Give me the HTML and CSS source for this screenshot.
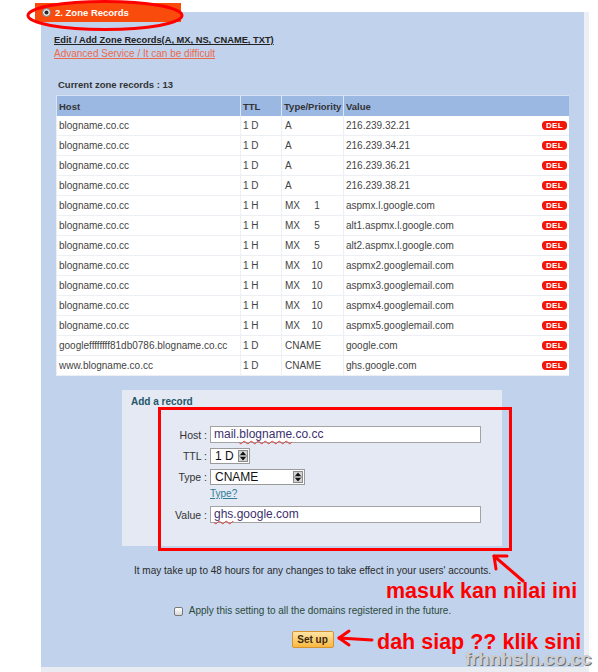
FILE: index.html
```html
<!DOCTYPE html>
<html lang="en">
<head>
  <meta charset="UTF-8">
  <title>Zone Records</title>
  <link rel="stylesheet" href="styles.css">
</head>
<body>

<div class="tab">
  <svg class="radio" width="9" height="9" viewBox="0 0 9 9">
    <circle cx="4.5" cy="4.5" r="4" fill="#e8e8e8" stroke="#7a7a7a" stroke-width="1"/>
    <circle cx="4.5" cy="4.5" r="2" fill="#2a2a2a"/>
  </svg>
  <span>2. Zone Records</span>
</div>

<div class="panel">
  <div class="intro">
    <a class="edit-link" href="#">Edit / Add Zone Records(A, MX, NS, CNAME, TXT)</a>
    <a class="adv-link" href="#">Advanced Service / It can be difficult</a>
  </div>

  <div class="count">Current zone records : 13</div>

  <table class="records">
    <colgroup>
      <col style="width: 184px">
      <col style="width: 41px">
      <col style="width: 62px">
      <col>
    </colgroup>
    <thead>
      <tr><th>Host</th><th>TTL</th><th>Type/Priority</th><th>Value</th></tr>
    </thead>
    <tbody id="zone-rows"></tbody>
  </table>

  <div class="add-box">
    <h3>Add a record</h3>
    <div class="row row-host">
      <label class="label">Host :</label>
      <div class="field">mail.<span class="spell">blogname</span>.co.cc</div>
    </div>
    <div class="row row-ttl">
      <label class="label">TTL :</label>
      <div class="select select-ttl">
        <span class="val">1 D</span>
        <span class="spin"><svg width="8" height="12" viewBox="0 0 8 12"><path d="M4 1.5 L7 5 H1 Z M1 7 H7 L4 10.5 Z" fill="#111"/><path d="M0 6 H8" stroke="#777" stroke-width="1"/></svg></span>
      </div>
    </div>
    <div class="row row-type">
      <label class="label">Type :</label>
      <div class="select select-type">
        <span class="val">CNAME</span>
        <span class="spin"><svg width="8" height="12" viewBox="0 0 8 12"><path d="M4 1.5 L7 5 H1 Z M1 7 H7 L4 10.5 Z" fill="#111"/><path d="M0 6 H8" stroke="#777" stroke-width="1"/></svg></span>
      </div>
    </div>
    <div class="row row-help">
      <span class="label"></span>
      <a class="type-help" href="#">Type?</a>
    </div>
    <div class="row row-value">
      <label class="label">Value :</label>
      <div class="field"><span class="spell">ghs</span>.google.com</div>
    </div>
  </div>

  <p class="note">It may take up to 48 hours for any changes to take effect in your users' accounts.</p>

  <div class="apply">
    <span class="checkbox"></span>
    <span>Apply this setting to all the domains registered in the future.</span>
  </div>

  <button class="setup-btn" type="button">Set up</button>
</div>

<!-- hand-drawn marks over the screen -->
<svg class="marks" width="598" height="672" viewBox="0 0 598 672">
  <ellipse cx="105" cy="15.5" rx="77" ry="14" fill="none" stroke="#ff0000" stroke-width="3"/>
  <rect x="159.5" y="408.5" width="351" height="141" fill="none" stroke="#ff0000" stroke-width="3"/>
  <g fill="none" stroke="#ff0000" stroke-width="3" stroke-linecap="round" stroke-linejoin="round">
    <path d="M523 581 L494 556"/>
    <path d="M507 556 L494 556 L496 569"/>
    <path d="M372 640 L339 638"/>
    <path d="M349 631 L339 638 L349 645"/>
  </g>
</svg>
<div class="callout callout-fill">masuk kan nilai ini</div>
<div class="callout callout-click">dah siap ?? klik sini</div>
<div class="stamp">frhnhsln.co.cc</div>

<script>
  const records = [
    ['blogname.co.cc', '1 D', 'A', '', '216.239.32.21'],
    ['blogname.co.cc', '1 D', 'A', '', '216.239.34.21'],
    ['blogname.co.cc', '1 D', 'A', '', '216.239.36.21'],
    ['blogname.co.cc', '1 D', 'A', '', '216.239.38.21'],
    ['blogname.co.cc', '1 H', 'MX', '1', 'aspmx.l.google.com'],
    ['blogname.co.cc', '1 H', 'MX', '5', 'alt1.aspmx.l.google.com'],
    ['blogname.co.cc', '1 H', 'MX', '5', 'alt2.aspmx.l.google.com'],
    ['blogname.co.cc', '1 H', 'MX', '10', 'aspmx2.googlemail.com'],
    ['blogname.co.cc', '1 H', 'MX', '10', 'aspmx3.googlemail.com'],
    ['blogname.co.cc', '1 H', 'MX', '10', 'aspmx4.googlemail.com'],
    ['blogname.co.cc', '1 H', 'MX', '10', 'aspmx5.googlemail.com'],
    ['googleffffffff81db0786.blogname.co.cc', '1 D', 'CNAME', '', 'google.com'],
    ['www.blogname.co.cc', '1 D', 'CNAME', '', 'ghs.google.com']
  ];

  const tbody = document.getElementById('zone-rows');
  records.forEach(r => {
    const tr = document.createElement('tr');
    const prio = r[3] ? `<span class="prio">${r[3]}</span>` : '';
    tr.innerHTML = `<td>${r[0]}</td><td>${r[1]}</td><td><span class="rtype">${r[2]}</span>${prio}</td>` +
      `<td><div class="value-cell"><span>${r[4]}</span><span class="del">DEL</span></div></td>`;
    tbody.appendChild(tr);
  });
</script>

</body>
</html>
```

FILE: styles.css
```css
body {
  margin: 0;
  font-family: "Liberation Sans", Arial, sans-serif;
  font-size: 10px;
  color: #333;
  background: #fff;
}

.tab {
  position: relative;
  z-index: 1;
  margin: 3px 0 0 35px;
  width: 146px;
  height: 19px;
  padding-left: 7px;
  box-sizing: border-box;
  display: flex;
  align-items: center;
  gap: 4px;
  background: #f84b0c;
  color: #fff;
  font-size: 9.5px;
  font-weight: bold;
}

.panel {
  margin: -10px 0 0 41px;
  width: 543px;
  padding: 22px 0 19px;
  background: #c0d2ec;
  border-right: 5px solid #eceff4;
  border-bottom: 6px solid #e9edf2;
}

.intro {
  padding-left: 13px;
  line-height: 13px;
}

.intro a {
  display: block;
  width: max-content;
}

.edit-link {
  color: #222;
  font-size: 9.3px;
  font-weight: bold;
}

.adv-link {
  color: #ea6a4c;
}

.count {
  margin: 18px 0 0 17px;
  line-height: 13px;
  font-size: 9.5px;
  font-weight: bold;
}

.records {
  margin: 4px 0 0 15px;
  width: 513px;
  table-layout: fixed;
  border-collapse: collapse;
  background: #fff;
}

.records th {
  height: 20px;
  padding: 0 2px;
  text-align: left;
  font-size: 9.5px;
  background: #9bb8e3;
  border-left: 1px solid #dbe5f3;
  border-top: 1px solid #d6e1f1;
  color: #333;
}

.records td {
  height: 19px;
  padding: 0 2px;
  color: #444;
  border-left: 1px solid #eceff3;
  border-bottom: 1px solid #eceff3;
  white-space: nowrap;
}

.rtype {
  display: inline-block;
  width: 22px;
  padding-left: 1px;
}

.prio {
  display: inline-block;
  width: 20px;
  text-align: center;
}

.value-cell {
  display: flex;
  justify-content: space-between;
  align-items: center;
}

.del {
  width: 25px;
  height: 9px;
  line-height: 9px;
  border-radius: 4px;
  background: #f0180a;
  color: #fff;
  font-size: 8px;
  font-weight: bold;
  text-align: center;
  letter-spacing: 0.4px;
}

.add-box {
  margin: 14px 0 0 81px;
  width: 380px;
  padding: 5px 0 23px 9px;
  box-sizing: border-box;
  background: #e4e9f3;
}

.add-box h3 {
  margin: 0;
  font-size: 10px;
  line-height: 13px;
  color: #22566a;
}

.row {
  display: flex;
  align-items: center;
}

.label {
  width: 76px;
  margin-right: 3px;
  text-align: right;
  font-size: 10.5px;
  color: #333;
}

.row-host { margin-top: 18px; }
.row-ttl { margin-top: 5px; }
.row-type { margin-top: 5px; }
.row-help { margin-top: 3px; }
.row-value { margin-top: 6px; }

.field {
  width: 271px;
  height: 17px;
  box-sizing: border-box;
  padding-left: 3px;
  line-height: 15px;
  font-size: 12px;
  color: #3c2f6e;
  background: #fff;
  border: 1px solid #a3a3a3;
}

.spell {
  text-decoration: underline wavy #e23a3a;
  text-decoration-thickness: 1px;
  text-underline-offset: 2px;
}

.select {
  height: 16px;
  box-sizing: border-box;
  display: flex;
  align-items: stretch;
  background: #fff;
  border: 1px solid #9a9a9a;
  font-size: 12px;
  color: #111;
}

.select-ttl { width: 40px; }
.select-type { width: 95px; }

.select .val {
  flex: 1;
  padding-left: 4px;
  line-height: 14px;
}

.spin {
  width: 10px;
  margin: 1px;
  box-sizing: border-box;
  display: flex;
  align-items: center;
  justify-content: center;
  background: #d4d4d4;
  border: 1px solid #8a8a8a;
}

.type-help {
  line-height: 12px;
  color: #2e7d9a;
}

.note {
  margin: 19px 0 0;
  line-height: 12px;
  text-align: center;
  color: #2a2a2a;
}

.apply {
  margin-top: 28px;
  display: flex;
  justify-content: center;
  align-items: center;
  gap: 6px;
  line-height: 12px;
  color: #2d4a3a;
}

.checkbox {
  width: 9px;
  height: 9px;
  box-sizing: border-box;
  border: 1px solid #7a7a7a;
  border-radius: 2px;
  background: linear-gradient(#fff, #d8d8d8);
}

.setup-btn {
  display: block;
  margin: 14px auto 0;
  width: 42px;
  height: 17px;
  padding: 0;
  border: 1px solid #d69330;
  border-radius: 2px;
  background: linear-gradient(#ffe4a4, #f8b840);
  font-family: inherit;
  font-size: 10px;
  font-weight: bold;
  color: #3a2a10;
}

.marks {
  position: absolute;
  z-index: 2;
  top: 0;
  left: 0;
  pointer-events: none;
}

.callout {
  position: absolute;
  z-index: 3;
  font-size: 21.5px;
  font-weight: bold;
  line-height: 21.5px;
  color: #ff0000;
  white-space: nowrap;
}

.callout-fill {
  top: 581px;
  left: 386px;
}

.callout-click {
  top: 632px;
  left: 377px;
}

.stamp {
  position: absolute;
  z-index: 3;
  top: 650px;
  left: 465px;
  font-size: 18.5px;
  font-weight: bold;
  line-height: 18.5px;
  color: #cdcdcd;
  text-shadow: 1px 1px 0 #6e6e6e;
  white-space: nowrap;
}
```
